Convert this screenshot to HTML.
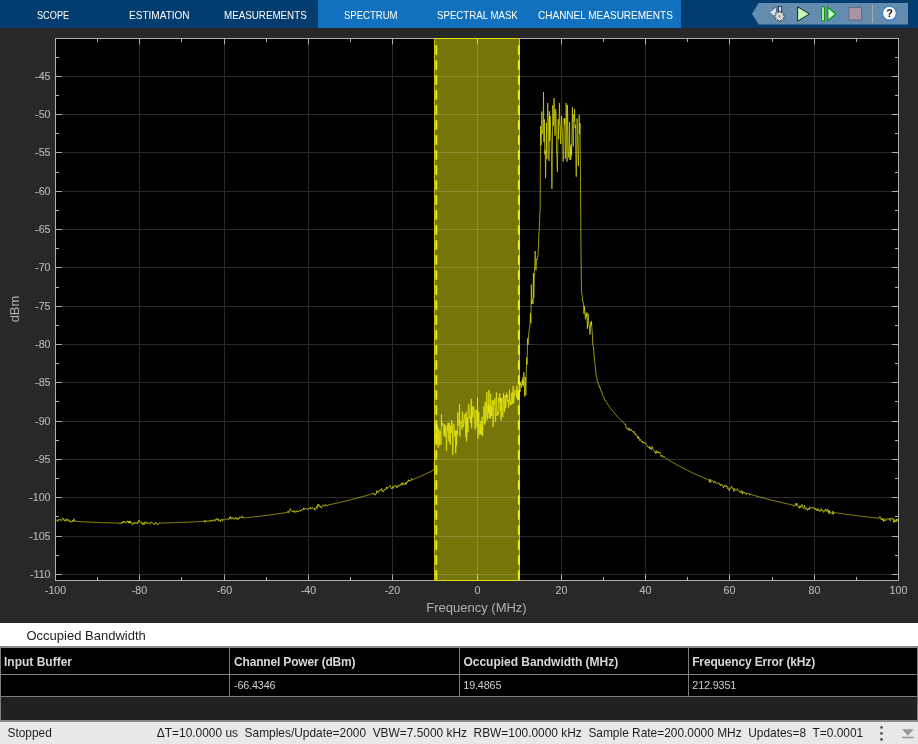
<!DOCTYPE html>
<html><head><meta charset="utf-8"><title>Spectrum Analyzer</title>
<style>
html,body{margin:0;padding:0;}
body{width:918px;height:744px;overflow:hidden;background:#282828;font-family:"Liberation Sans",Arial,sans-serif;position:relative;}
.tb,.hdr,.tbl,.sb{will-change:transform;}
.tb{position:absolute;left:0;top:0;width:918px;height:28px;background:#033d70;}
.sel{position:absolute;left:318px;top:0;width:363px;height:28px;background:#1171be;}
.tab{position:absolute;top:0;height:28px;line-height:30px;color:#fff;font-size:11px;white-space:nowrap;transform-origin:0 50%;}
.plot{position:absolute;left:0;top:28px;will-change:transform;}
.hdr{position:absolute;left:0;top:623px;width:918px;height:24px;background:#fff;color:#222;font-size:13px;line-height:25.6px;}
.hdr span{position:absolute;left:26.5px;top:0;}
.tbl{position:absolute;left:0;top:646px;width:918px;height:76px;background:#212121;box-sizing:border-box;border:2px solid #8a8a8a;border-left:1px solid #7d7d7d;border-right:1px solid #7d7d7d;}
.row{position:absolute;left:0;width:916px;background:#000;border-bottom:1px solid #7d7d7d;}
.r1{top:0;height:26px;}
.r2{top:27px;height:21px;}
.cell{position:absolute;top:0;bottom:0;box-sizing:border-box;border-left:1px solid #7d7d7d;padding-left:4px;white-space:nowrap;}
.r1 .cell{font-weight:bold;font-size:12px;color:#d8d8d8;line-height:29px;}
.r2 .cell{font-size:10.8px;color:#cdcdcd;line-height:20px;letter-spacing:-0.15px;}
.sb{position:absolute;left:0;top:722px;width:918px;height:22px;background:#e8e8e8;color:#1e1e1e;font-size:11.92px;line-height:22px;white-space:nowrap;}
.sb .l{position:absolute;left:7.5px;top:0;}
.sb .r{position:absolute;right:54.8px;top:0;}
</style></head><body>
<div class="tb">
<div class="sel"></div>
<div class="tab" style="left:36.8px;transform:scaleX(0.8338)">SCOPE</div>
<div class="tab" style="left:128.6px;transform:scaleX(0.9127)">ESTIMATION</div>
<div class="tab" style="left:223.5px;transform:scaleX(0.8902)">MEASUREMENTS</div>
<div class="tab" style="left:343.9px;transform:scaleX(0.8671)">SPECTRUM</div>
<div class="tab" style="left:436.8px;transform:scaleX(0.8792)">SPECTRAL MASK</div>
<div class="tab" style="left:538.3px;transform:scaleX(0.9102)">CHANNEL MEASUREMENTS</div>
<svg style="position:absolute;left:748px;top:0" width="170" height="28" viewBox="748 0 170 28">
<path d="M752,13.7 L758.6,3 H908 V24.4 H758.6 Z" fill="#648caf"/>
<!-- settings icon -->
<path d="M769.4,12.4 L776.4,6.7 V18 Z" fill="#cce6ff" stroke="#4a5a6a" stroke-width="0.8" stroke-linejoin="round"/>
<rect x="778.4" y="6.5" width="3.2" height="8" fill="#cce6ff" stroke="#2a2f36" stroke-width="0.9"/>
<path d="M783.29,15.39 L784.76,15.64 L784.76,16.96 L783.29,17.21 L782.83,18.34 L783.69,19.55 L782.75,20.49 L781.54,19.63 L780.41,20.09 L780.16,21.56 L778.84,21.56 L778.59,20.09 L777.46,19.63 L776.25,20.49 L775.31,19.55 L776.17,18.34 L775.71,17.21 L774.24,16.96 L774.24,15.64 L775.71,15.39 L776.17,14.26 L775.31,13.05 L776.25,12.11 L777.46,12.97 L778.59,12.51 L778.84,11.04 L780.16,11.04 L780.41,12.51 L781.54,12.97 L782.75,12.11 L783.69,13.05 L782.83,14.26Z" fill="#e2e2e2" stroke="#4a4a4a" stroke-width="0.8" stroke-linejoin="round"/>
<circle cx="779.5" cy="16.3" r="1.4" fill="#999"/>
<!-- play -->
<path d="M797.6,6.8 L809.4,13.9 L797.6,21.2 Z" fill="#c4f8b8" stroke="#1e2a1e" stroke-width="1" stroke-linejoin="round"/>
<!-- step -->
<rect x="821.6" y="6.7" width="2.8" height="14.4" rx="1" fill="#ccffcc" stroke="#0a9a0a" stroke-width="1.2"/>
<path d="M827.8,7.2 L835.8,13.9 L827.8,20.6 Z" fill="#ccffcc" stroke="#0a9a0a" stroke-width="1.3" stroke-linejoin="round"/>
<!-- stop -->
<rect x="848.9" y="7.4" width="12.6" height="12.6" fill="#ab94a4" stroke="#5f6a78" stroke-width="0.9"/>
<path d="M872.5,5V22.7" stroke="#b0a8a0" stroke-width="1"/>
<circle cx="889.4" cy="13.2" r="6.9" fill="#fff" stroke="#2a7ad0" stroke-width="1.1"/>
<text x="889.5" y="17.4" font-family="'Liberation Sans',Arial,sans-serif" font-weight="bold" font-size="11" text-anchor="middle" fill="#1a1a1a">?</text>
</svg>
</div>
<svg class="plot" width="918" height="594" viewBox="0 28 918 594">
<rect x="55.5" y="38.5" width="843" height="542" fill="#000"/>
<rect x="434.5" y="38.5" width="85" height="542" fill="#75750a" stroke="#c9c90a" stroke-width="1"/>
<clipPath id="cp"><rect x="55.5" y="38.5" width="843" height="542"/></clipPath>
<clipPath id="cb"><rect x="434.5" y="38.5" width="85" height="542"/></clipPath>
<path d="M55.00,519.95 L55.42,520.21 L55.84,520.10 L56.26,519.78 L56.68,520.44 L57.10,519.88 L57.52,520.66 L57.94,521.66 L58.36,519.97 L58.78,519.11 L59.20,520.11 L59.62,519.91 L60.04,520.14 L60.46,519.60 L60.88,520.35 L61.30,520.93 L61.72,519.48 L62.14,519.40 L62.56,517.72 L62.98,518.64 L63.40,518.82 L63.82,520.23 L64.24,519.88 L64.66,521.24 L65.08,521.13 L65.50,520.95 L65.92,518.66 L66.34,520.38 L66.76,521.04 L67.18,521.25 L67.60,519.36 L68.02,520.08 L68.44,519.77 L68.86,519.70 L69.28,521.71 L69.70,520.40 L70.12,521.41 L70.54,522.42 L70.96,521.24 L71.38,521.63 L71.80,521.65 L72.22,521.82 L72.64,520.16 L73.06,521.50 L73.48,521.79 L73.90,518.74 L74.32,520.54 L74.74,520.06 L75.16,521.36 L75.58,521.38 L76.00,521.41 L76.42,521.43 L76.84,521.46 L77.26,521.48 L77.68,521.51 L78.10,521.53 L78.52,521.55 L78.94,521.58 L79.36,521.60 L79.78,521.63 L80.20,521.65 L80.62,521.67 L81.04,521.69 L81.46,521.72 L81.88,521.74 L82.30,521.76 L82.72,521.78 L83.14,521.81 L83.56,521.83 L83.98,521.85 L84.40,521.87 L84.82,521.89 L85.24,521.92 L85.66,521.94 L86.08,521.96 L86.50,521.98 L86.92,522.00 L87.34,522.02 L87.76,522.04 L88.18,522.06 L88.60,522.08 L89.02,522.10 L89.44,522.12 L89.86,522.14 L90.28,522.16 L90.70,522.18 L91.12,522.20 L91.54,522.21 L91.96,522.23 L92.38,522.25 L92.80,522.27 L93.22,522.29 L93.64,522.31 L94.06,522.32 L94.48,522.34 L94.90,522.36 L95.32,522.38 L95.74,522.39 L96.16,522.41 L96.58,522.43 L97.00,522.44 L97.42,522.46 L97.84,522.48 L98.26,522.49 L98.68,522.51 L99.10,522.52 L99.52,522.54 L99.94,522.55 L100.36,522.57 L100.78,522.58 L101.20,522.60 L101.62,522.61 L102.04,522.63 L102.46,522.64 L102.88,522.66 L103.30,522.67 L103.72,522.69 L104.14,522.70 L104.56,522.71 L104.98,522.73 L105.40,522.74 L105.82,522.75 L106.24,522.76 L106.66,522.78 L107.08,522.79 L107.50,522.80 L107.92,522.81 L108.34,522.83 L108.76,522.84 L109.18,522.85 L109.60,522.86 L110.02,522.87 L110.44,522.88 L110.86,522.90 L111.28,522.91 L111.70,522.92 L112.12,522.93 L112.54,522.94 L112.96,522.95 L113.38,522.96 L113.80,522.97 L114.22,522.98 L114.64,522.99 L115.06,523.00 L115.48,523.01 L115.90,523.02 L116.32,523.02 L116.74,523.03 L117.16,523.04 L117.58,523.05 L118.00,523.06 L118.42,523.07 L118.84,523.07 L119.26,523.08 L119.68,524.06 L120.10,523.64 L120.52,523.70 L120.94,523.93 L121.36,522.50 L121.78,522.04 L122.20,523.41 L122.62,523.28 L123.04,521.08 L123.46,522.28 L123.88,522.40 L124.30,521.16 L124.72,522.78 L125.14,522.21 L125.56,523.24 L125.98,522.52 L126.40,522.22 L126.82,521.14 L127.24,521.96 L127.66,520.80 L128.08,521.72 L128.50,522.98 L128.92,521.17 L129.34,523.25 L129.76,520.80 L130.18,522.87 L130.60,521.57 L131.02,523.26 L131.44,523.11 L131.86,522.57 L132.28,524.47 L132.70,525.13 L133.12,523.72 L133.54,523.44 L133.96,522.50 L134.38,522.09 L134.80,523.81 L135.22,522.41 L135.64,522.86 L136.06,522.58 L136.48,523.21 L136.90,522.43 L137.32,523.95 L137.74,522.51 L138.16,522.96 L138.58,520.83 L139.00,520.08 L139.42,521.45 L139.84,521.47 L140.26,522.19 L140.68,522.56 L141.10,523.12 L141.52,521.85 L141.94,522.34 L142.36,524.76 L142.78,523.08 L143.20,522.66 L143.62,523.95 L144.04,524.91 L144.46,522.18 L144.88,523.38 L145.30,522.57 L145.72,521.77 L146.14,523.44 L146.56,523.07 L146.98,522.99 L147.40,522.09 L147.82,523.30 L148.24,523.28 L148.66,523.51 L149.08,522.92 L149.50,523.34 L149.92,524.20 L150.34,522.27 L150.76,523.06 L151.18,522.57 L151.60,521.79 L152.02,522.43 L152.44,523.26 L152.86,522.84 L153.28,523.04 L153.70,523.50 L154.12,525.01 L154.54,524.47 L154.96,523.74 L155.38,522.28 L155.80,522.05 L156.22,523.86 L156.64,524.31 L157.06,523.68 L157.48,524.83 L157.90,524.62 L158.32,524.29 L158.74,524.02 L159.16,522.66 L159.58,523.06 L160.00,523.05 L160.42,523.05 L160.84,523.04 L161.26,523.03 L161.68,523.02 L162.10,523.01 L162.52,523.00 L162.94,522.99 L163.36,522.98 L163.78,522.97 L164.20,522.96 L164.62,522.95 L165.04,522.94 L165.46,522.93 L165.88,522.92 L166.30,522.91 L166.72,522.90 L167.14,522.89 L167.56,522.88 L167.98,522.87 L168.40,522.86 L168.82,522.84 L169.24,522.83 L169.66,522.82 L170.08,522.81 L170.50,522.80 L170.92,522.78 L171.34,522.77 L171.76,522.76 L172.18,522.74 L172.60,522.73 L173.02,522.72 L173.44,522.70 L173.86,522.69 L174.28,522.68 L174.70,522.66 L175.12,522.65 L175.54,522.63 L175.96,522.62 L176.38,522.61 L176.80,522.59 L177.22,522.58 L177.64,522.56 L178.06,522.55 L178.48,522.53 L178.90,522.51 L179.32,522.50 L179.74,522.48 L180.16,522.47 L180.58,522.45 L181.00,522.43 L181.42,522.42 L181.84,522.40 L182.26,522.38 L182.68,522.37 L183.10,522.35 L183.52,522.33 L183.94,522.31 L184.36,522.30 L184.78,522.28 L185.20,522.26 L185.62,522.24 L186.04,522.22 L186.46,522.20 L186.88,522.18 L187.30,522.17 L187.72,522.15 L188.14,522.13 L188.56,522.11 L188.98,522.09 L189.40,522.07 L189.82,522.05 L190.24,522.03 L190.66,522.01 L191.08,521.99 L191.50,521.97 L191.92,521.95 L192.34,521.92 L192.76,521.90 L193.18,521.88 L193.60,521.86 L194.02,521.84 L194.44,521.82 L194.86,521.79 L195.28,521.77 L195.70,521.75 L196.12,521.73 L196.54,521.70 L196.96,521.68 L197.38,521.66 L197.80,521.63 L198.22,521.61 L198.64,521.59 L199.06,521.56 L199.48,521.54 L199.90,521.52 L200.32,521.49 L200.74,521.47 L201.16,521.44 L201.58,521.42 L202.00,521.39 L202.42,521.37 L202.84,521.34 L203.26,521.32 L203.68,521.67 L204.10,520.78 L204.52,520.31 L204.94,522.55 L205.36,521.42 L205.78,520.38 L206.20,520.77 L206.62,520.56 L207.04,521.58 L207.46,522.10 L207.88,521.47 L208.30,520.84 L208.72,521.40 L209.14,521.20 L209.56,520.32 L209.98,521.34 L210.40,521.17 L210.82,521.36 L211.24,519.86 L211.66,520.79 L212.08,521.39 L212.50,520.07 L212.92,520.40 L213.34,520.84 L213.76,520.20 L214.18,519.57 L214.60,520.44 L215.02,521.47 L215.44,519.57 L215.86,519.64 L216.28,518.73 L216.70,519.48 L217.12,518.27 L217.54,518.87 L217.96,520.50 L218.38,518.92 L218.80,520.76 L219.22,520.83 L219.64,519.71 L220.06,520.23 L220.48,521.84 L220.90,519.94 L221.32,519.98 L221.74,518.98 L222.16,520.06 L222.58,520.97 L223.00,520.68 L223.42,519.10 L223.84,519.19 L224.26,519.36 L224.68,519.79 L225.10,519.40 L225.52,519.83 L225.94,519.60 L226.36,519.37 L226.78,519.07 L227.20,519.43 L227.62,518.53 L228.04,518.73 L228.46,519.85 L228.88,519.57 L229.30,518.43 L229.72,516.91 L230.14,518.95 L230.56,516.61 L230.98,516.81 L231.40,518.91 L231.82,518.86 L232.24,518.49 L232.66,517.24 L233.08,518.35 L233.50,518.00 L233.92,518.94 L234.34,519.55 L234.76,518.56 L235.18,517.45 L235.60,517.44 L236.02,518.70 L236.44,519.16 L236.86,517.75 L237.28,519.45 L237.70,517.95 L238.12,519.38 L238.54,518.94 L238.96,518.51 L239.38,516.79 L239.80,518.15 L240.22,517.74 L240.64,517.36 L241.06,517.66 L241.48,516.99 L241.90,515.73 L242.32,518.04 L242.74,517.25 L243.16,517.98 L243.58,517.86 L244.00,517.99 L244.42,517.94 L244.84,517.90 L245.26,517.86 L245.68,517.81 L246.10,517.77 L246.52,517.72 L246.94,517.68 L247.36,517.64 L247.78,517.59 L248.20,517.55 L248.62,517.50 L249.04,517.45 L249.46,517.41 L249.88,517.36 L250.30,517.32 L250.72,517.27 L251.14,517.22 L251.56,517.18 L251.98,517.13 L252.40,517.08 L252.82,517.04 L253.24,516.99 L253.66,516.94 L254.08,516.89 L254.50,516.84 L254.92,516.80 L255.34,516.75 L255.76,516.70 L256.18,516.65 L256.60,516.60 L257.02,516.55 L257.44,516.50 L257.86,516.45 L258.28,516.40 L258.70,516.35 L259.12,516.30 L259.54,516.25 L259.96,516.20 L260.38,516.15 L260.80,516.10 L261.22,516.05 L261.64,516.00 L262.06,515.95 L262.48,515.89 L262.90,515.84 L263.32,515.79 L263.74,515.74 L264.16,515.68 L264.58,515.63 L265.00,515.58 L265.42,515.52 L265.84,515.47 L266.26,515.42 L266.68,515.36 L267.10,515.31 L267.52,515.25 L267.94,515.20 L268.36,515.14 L268.78,515.09 L269.20,515.03 L269.62,514.98 L270.04,514.92 L270.46,514.87 L270.88,514.81 L271.30,514.75 L271.72,514.70 L272.14,514.64 L272.56,514.58 L272.98,514.53 L273.40,514.47 L273.82,514.41 L274.24,514.35 L274.66,514.30 L275.08,514.24 L275.50,514.18 L275.92,514.12 L276.34,514.06 L276.76,514.00 L277.18,513.94 L277.60,513.88 L278.02,513.82 L278.44,513.76 L278.86,513.70 L279.28,513.64 L279.70,513.58 L280.12,513.52 L280.54,513.46 L280.96,513.40 L281.38,513.34 L281.80,513.28 L282.22,513.22 L282.64,513.15 L283.06,513.09 L283.48,513.03 L283.90,512.97 L284.32,512.90 L284.74,512.84 L285.16,512.78 L285.58,512.71 L286.00,512.65 L286.42,512.58 L286.84,512.52 L287.26,512.45 L287.68,512.39 L288.10,510.95 L288.52,512.69 L288.94,512.52 L289.36,511.06 L289.78,510.36 L290.20,508.65 L290.62,510.27 L291.04,510.89 L291.46,511.07 L291.88,511.07 L292.30,510.81 L292.72,511.96 L293.14,510.82 L293.56,511.73 L293.98,512.50 L294.40,510.93 L294.82,510.61 L295.24,512.31 L295.66,511.91 L296.08,511.65 L296.50,512.19 L296.92,510.62 L297.34,511.60 L297.76,511.10 L298.18,511.83 L298.60,511.10 L299.02,510.72 L299.44,510.53 L299.86,511.19 L300.28,510.26 L300.70,511.34 L301.12,510.79 L301.54,509.45 L301.96,510.13 L302.38,509.10 L302.80,509.52 L303.22,509.56 L303.64,507.75 L304.06,509.68 L304.48,509.22 L304.90,508.11 L305.32,508.58 L305.74,508.97 L306.16,508.43 L306.58,509.01 L307.00,509.45 L307.42,509.54 L307.84,508.55 L308.26,509.27 L308.68,509.00 L309.10,508.44 L309.52,507.97 L309.94,508.61 L310.36,506.99 L310.78,508.70 L311.20,508.40 L311.62,508.46 L312.04,508.54 L312.46,507.31 L312.88,507.71 L313.30,508.73 L313.72,509.26 L314.14,509.31 L314.56,507.98 L314.98,509.84 L315.40,510.39 L315.82,509.46 L316.24,507.83 L316.66,506.24 L317.08,508.35 L317.50,506.64 L317.92,504.07 L318.34,506.32 L318.76,504.81 L319.18,504.53 L319.60,505.22 L320.02,507.31 L320.44,506.45 L320.86,506.61 L321.28,508.16 L321.70,507.72 L322.12,506.02 L322.54,505.32 L322.96,504.81 L323.38,505.05 L323.80,505.96 L324.22,505.85 L324.64,505.76 L325.06,506.29 L325.48,504.23 L325.90,504.67 L326.32,505.24 L326.74,505.85 L327.16,506.25 L327.58,506.04 L328.00,505.02 L328.42,504.93 L328.84,504.84 L329.26,504.75 L329.68,504.66 L330.10,504.57 L330.52,504.48 L330.94,504.39 L331.36,504.30 L331.78,504.21 L332.20,504.11 L332.62,504.02 L333.04,503.93 L333.46,503.84 L333.88,503.74 L334.30,503.65 L334.72,503.55 L335.14,503.46 L335.56,503.37 L335.98,503.27 L336.40,503.18 L336.82,503.08 L337.24,502.98 L337.66,502.89 L338.08,502.79 L338.50,502.70 L338.92,502.60 L339.34,502.50 L339.76,502.40 L340.18,502.31 L340.60,502.21 L341.02,502.11 L341.44,502.01 L341.86,501.91 L342.28,501.81 L342.70,501.71 L343.12,501.61 L343.54,501.51 L343.96,501.41 L344.38,501.31 L344.80,501.21 L345.22,501.11 L345.64,501.00 L346.06,500.90 L346.48,500.80 L346.90,500.70 L347.32,500.59 L347.74,500.49 L348.16,500.39 L348.58,500.28 L349.00,500.18 L349.42,500.07 L349.84,499.97 L350.26,499.86 L350.68,499.75 L351.10,499.65 L351.52,499.54 L351.94,499.44 L352.36,499.33 L352.78,499.22 L353.20,499.11 L353.62,499.00 L354.04,498.90 L354.46,498.79 L354.88,498.68 L355.30,498.57 L355.72,498.46 L356.14,498.35 L356.56,498.24 L356.98,498.12 L357.40,498.01 L357.82,497.90 L358.24,497.79 L358.66,497.68 L359.08,497.56 L359.50,497.45 L359.92,497.34 L360.34,497.22 L360.76,497.11 L361.18,496.99 L361.60,496.88 L362.02,496.76 L362.44,496.65 L362.86,496.53 L363.28,496.41 L363.70,496.30 L364.12,496.18 L364.54,496.06 L364.96,495.95 L365.38,495.83 L365.80,495.71 L366.22,495.59 L366.64,495.47 L367.06,495.35 L367.48,495.23 L367.90,495.11 L368.32,494.99 L368.74,494.87 L369.16,494.74 L369.58,494.62 L370.00,494.50 L370.42,494.38 L370.84,494.25 L371.26,494.13 L371.68,494.00 L372.10,493.88 L372.52,493.08 L372.94,492.81 L373.36,494.25 L373.78,494.30 L374.20,494.13 L374.62,493.40 L375.04,495.36 L375.46,495.14 L375.88,493.97 L376.30,493.49 L376.72,490.64 L377.14,492.57 L377.56,491.68 L377.98,491.55 L378.40,492.56 L378.82,491.64 L379.24,490.07 L379.66,491.12 L380.08,490.36 L380.50,490.06 L380.92,489.45 L381.34,489.93 L381.76,488.44 L382.18,491.56 L382.60,490.41 L383.02,491.21 L383.44,492.08 L383.86,491.24 L384.28,489.08 L384.70,489.80 L385.12,489.15 L385.54,489.56 L385.96,488.80 L386.38,487.04 L386.80,489.03 L387.22,487.27 L387.64,488.14 L388.06,487.86 L388.48,487.06 L388.90,486.70 L389.32,486.33 L389.74,486.45 L390.16,485.49 L390.58,486.85 L391.00,488.59 L391.42,488.92 L391.84,488.34 L392.26,487.70 L392.68,486.65 L393.10,488.63 L393.52,486.80 L393.94,486.12 L394.36,485.56 L394.78,486.44 L395.20,485.72 L395.62,486.39 L396.04,485.60 L396.46,486.57 L396.88,488.06 L397.30,485.80 L397.72,485.90 L398.14,486.78 L398.56,486.34 L398.98,484.79 L399.40,485.56 L399.82,485.97 L400.24,484.89 L400.66,484.24 L401.08,485.24 L401.50,483.09 L401.92,483.25 L402.34,483.12 L402.76,485.29 L403.18,482.53 L403.60,483.12 L404.02,483.31 L404.44,484.40 L404.86,484.32 L405.28,484.66 L405.70,482.35 L406.12,484.44 L406.54,482.48 L406.96,481.74 L407.38,482.66 L407.80,481.43 L408.22,479.61 L408.64,481.27 L409.06,480.09 L409.48,480.54 L409.90,480.98 L410.32,480.55 L410.74,481.36 L411.16,480.02 L411.58,478.39 L412.00,478.84 L412.42,479.76 L412.84,479.59 L413.26,479.42 L413.68,479.24 L414.10,479.07 L414.52,478.89 L414.94,478.71 L415.36,478.54 L415.78,478.36 L416.20,478.18 L416.62,478.00 L417.04,477.82 L417.46,477.64 L417.88,477.46 L418.30,477.28 L418.72,477.10 L419.14,476.92 L419.56,476.73 L419.98,476.55 L420.40,476.36 L420.82,476.18 L421.24,475.99 L421.66,475.80 L422.08,475.62 L422.50,475.43 L422.92,475.24 L423.34,475.05 L423.76,474.86 L424.18,474.67 L424.60,474.48 L425.02,474.28 L425.44,474.09 L425.86,473.89 L426.28,473.70 L426.70,473.50 L427.12,473.31 L427.54,473.11 L427.96,472.91 L428.38,472.71 L428.80,472.51 L429.22,472.31 L429.64,472.11 L430.06,471.91 L430.48,471.71 L430.90,471.50 L431.32,471.30 L431.74,471.09 L432.16,470.89 L432.58,470.68 L433.00,470.47 L433.42,470.27 L433.84,470.06 L434.26,469.85 L434.30,469.83 L434.72,422.60 L435.14,432.53 L435.56,434.88 L435.98,436.07 L436.40,425.81 L436.82,441.11 L437.24,424.78 L437.66,432.75 L438.08,447.72 L438.50,428.57 L438.92,429.93 L439.34,445.25 L439.76,430.71 L440.18,431.32 L440.60,436.10 L441.02,444.84 L441.44,414.13 L441.86,426.06 L442.28,424.29 L442.70,423.42 L443.12,425.31 L443.54,425.28 L443.96,436.17 L444.38,424.48 L444.80,433.95 L445.22,437.01 L445.64,425.46 L446.06,433.71 L446.48,451.11 L446.90,435.73 L447.32,425.70 L447.74,431.09 L448.16,422.66 L448.58,434.72 L449.00,441.76 L449.42,423.10 L449.84,429.03 L450.26,444.66 L450.68,425.85 L451.10,433.09 L451.52,420.16 L451.94,422.09 L452.36,425.00 L452.78,455.02 L453.20,425.64 L453.62,424.16 L454.04,423.57 L454.46,427.32 L454.88,436.81 L455.30,430.80 L455.72,453.21 L456.14,430.59 L456.56,445.53 L456.98,430.84 L457.40,434.64 L457.82,412.37 L458.24,425.38 L458.66,425.71 L459.08,423.69 L459.50,404.18 L459.92,436.48 L460.34,421.47 L460.76,420.69 L461.18,422.28 L461.60,422.29 L462.02,429.35 L462.44,411.26 L462.86,414.43 L463.28,427.14 L463.70,425.09 L464.12,419.24 L464.54,417.00 L464.96,414.11 L465.38,421.87 L465.80,437.09 L466.22,411.56 L466.64,441.42 L467.06,432.91 L467.48,417.55 L467.90,432.14 L468.32,406.84 L468.74,403.95 L469.16,408.47 L469.58,417.68 L470.00,418.51 L470.42,416.43 L470.84,423.18 L471.26,398.86 L471.68,428.32 L472.10,406.34 L472.52,414.50 L472.94,417.13 L473.36,408.91 L473.78,406.44 L474.20,410.37 L474.62,421.34 L475.04,429.47 L475.46,429.11 L475.88,410.14 L476.30,412.34 L476.72,410.80 L477.14,427.46 L477.56,397.85 L477.98,438.49 L478.40,415.48 L478.82,411.95 L479.24,425.54 L479.66,434.74 L480.08,424.65 L480.50,433.89 L480.92,420.90 L481.34,435.13 L481.76,434.74 L482.18,416.75 L482.60,436.07 L483.02,419.09 L483.44,417.66 L483.86,406.67 L484.28,412.79 L484.70,424.85 L485.12,401.84 L485.54,422.25 L485.96,418.17 L486.38,416.87 L486.80,392.29 L487.22,411.81 L487.64,419.69 L488.06,404.97 L488.48,412.52 L488.90,389.92 L489.32,417.89 L489.74,404.51 L490.16,418.96 L490.58,393.85 L491.00,416.05 L491.42,406.63 L491.84,416.16 L492.26,400.41 L492.68,402.67 L493.10,427.08 L493.52,400.57 L493.94,401.35 L494.36,404.49 L494.78,398.47 L495.20,417.40 L495.62,422.11 L496.04,400.32 L496.46,392.36 L496.88,416.01 L497.30,415.12 L497.72,412.21 L498.14,414.95 L498.56,397.87 L498.98,402.78 L499.40,393.72 L499.82,393.29 L500.24,411.89 L500.66,398.26 L501.08,420.38 L501.50,403.21 L501.92,397.85 L502.34,408.87 L502.76,417.05 L503.18,405.69 L503.60,393.08 L504.02,404.20 L504.44,412.19 L504.86,397.36 L505.28,395.28 L505.70,408.35 L506.12,401.07 L506.54,392.68 L506.96,397.21 L507.38,394.72 L507.80,401.55 L508.22,399.97 L508.64,407.48 L509.06,403.99 L509.48,389.47 L509.90,401.38 L510.32,404.60 L510.74,401.32 L511.16,405.00 L511.58,394.85 L512.00,392.57 L512.42,403.56 L512.84,391.80 L513.26,386.10 L513.68,403.39 L514.10,393.28 L514.52,395.22 L514.94,389.82 L515.36,390.12 L515.78,390.85 L516.20,394.43 L516.62,397.95 L517.04,385.62 L517.46,399.57 L517.88,390.41 L518.30,390.83 L518.72,392.03 L519.14,388.93 L519.56,382.06 L519.98,392.03 L520.40,382.32 L520.82,385.21 L521.24,384.23 L521.66,387.85 L522.08,380.12 L522.50,384.91 L522.92,377.21 L523.34,386.23 L523.76,372.25 L524.18,374.49 L524.60,396.40 L525.02,379.94 L525.44,377.19 L525.86,395.33 L526.28,372.93 L526.70,357.55 L527.12,364.44 L527.54,338.36 L527.96,344.93 L528.38,341.62 L528.80,333.05 L529.22,329.32 L529.64,328.05 L530.06,323.90 L530.48,313.17 L530.90,323.25 L531.32,284.59 L531.74,304.06 L532.16,301.40 L532.58,299.23 L533.00,304.10 L533.42,273.08 L533.84,298.43 L534.26,278.46 L534.68,266.18 L535.10,250.95 L535.52,255.46 L535.94,270.13 L536.36,259.21 L536.78,260.06 L537.20,259.76 L537.62,256.99 L538.04,255.67 L538.46,245.60 L538.88,234.15 L539.30,229.00 L539.72,217.07 L540.14,208.56 L540.56,126.18 L540.98,145.43 L541.40,139.75 L541.82,111.50 L542.24,134.18 L542.66,132.46 L543.08,129.79 L543.50,92.10 L543.92,142.09 L544.34,119.34 L544.76,154.20 L545.18,150.22 L545.60,178.00 L546.02,152.86 L546.44,122.79 L546.86,159.02 L547.28,121.98 L547.70,103.10 L548.12,116.72 L548.54,121.88 L548.96,161.02 L549.38,111.20 L549.80,141.19 L550.22,115.89 L550.64,131.73 L551.06,136.91 L551.48,156.99 L551.90,188.80 L552.32,157.95 L552.74,105.20 L553.16,112.72 L553.58,125.75 L554.00,98.10 L554.42,107.71 L554.84,135.73 L555.26,134.78 L555.68,109.20 L556.10,114.25 L556.52,150.05 L556.94,158.51 L557.36,171.70 L557.78,148.92 L558.20,119.23 L558.62,139.20 L559.04,122.87 L559.46,103.00 L559.88,124.89 L560.30,125.98 L560.72,144.10 L561.14,128.01 L561.56,115.90 L561.98,122.41 L562.40,131.55 L562.82,146.20 L563.24,161.60 L563.66,149.51 L564.08,118.64 L564.50,124.46 L564.92,118.06 L565.34,158.56 L565.76,147.60 L566.18,103.00 L566.60,125.30 L567.02,161.60 L567.44,105.20 L567.86,124.87 L568.28,149.21 L568.70,157.50 L569.12,150.06 L569.54,122.00 L569.96,160.11 L570.38,146.32 L570.80,159.60 L571.22,144.36 L571.64,155.53 L572.06,121.70 L572.48,107.20 L572.90,141.02 L573.32,146.40 L573.74,114.51 L574.16,121.50 L574.58,109.20 L575.00,128.23 L575.42,124.68 L575.84,159.64 L576.26,176.70 L576.68,150.88 L577.10,118.47 L577.52,134.60 L577.94,150.63 L578.36,166.00 L578.78,147.38 L579.20,114.90 L579.62,134.00 L580.04,123.14 L580.46,172.73 L580.88,235.56 L581.00,250.70 L581.42,290.52 L581.84,293.93 L582.26,296.32 L582.68,301.07 L583.10,302.48 L583.52,302.55 L583.94,313.86 L584.36,306.27 L584.78,311.67 L585.20,317.24 L585.62,319.33 L586.04,313.40 L586.46,316.67 L586.88,312.43 L587.30,328.85 L587.72,323.25 L588.14,313.66 L588.56,321.14 L588.98,326.24 L589.40,325.68 L589.82,334.62 L590.24,332.71 L590.66,322.08 L591.08,325.65 L591.50,321.23 L591.92,328.65 L592.34,333.74 L592.76,344.14 L593.18,346.20 L593.60,347.97 L594.02,354.76 L594.44,360.48 L594.86,362.26 L595.28,366.26 L595.70,370.35 L596.12,374.63 L596.54,377.39 L596.96,378.38 L597.38,381.75 L597.80,382.19 L598.22,383.41 L598.64,383.66 L599.06,385.20 L599.48,387.39 L599.90,386.61 L600.32,388.81 L600.74,390.37 L601.16,390.64 L601.58,392.10 L602.00,392.32 L602.42,394.81 L602.84,395.70 L603.26,396.27 L603.68,396.36 L604.10,397.71 L604.52,399.32 L604.94,400.30 L605.36,400.48 L605.78,401.51 L606.20,401.82 L606.62,402.48 L607.04,403.13 L607.46,403.77 L607.88,404.40 L608.30,405.02 L608.72,405.63 L609.14,406.23 L609.56,406.83 L609.98,407.42 L610.40,408.00 L610.82,408.57 L611.24,409.13 L611.66,409.69 L612.08,410.24 L612.50,410.78 L612.92,411.32 L613.34,411.84 L613.76,412.35 L614.18,412.86 L614.60,413.36 L615.02,413.86 L615.44,414.35 L615.86,414.83 L616.28,415.31 L616.70,415.78 L617.12,416.25 L617.54,416.71 L617.96,417.17 L618.38,417.62 L618.80,418.07 L619.22,418.51 L619.64,418.95 L620.06,419.38 L620.48,419.81 L620.90,420.23 L621.32,420.65 L621.74,421.06 L622.16,421.47 L622.58,421.87 L623.00,422.28 L623.42,422.67 L623.84,423.07 L624.26,423.45 L624.68,423.84 L625.10,424.59 L625.52,423.82 L625.94,426.16 L626.36,428.11 L626.78,428.69 L627.20,427.68 L627.62,429.13 L628.04,428.99 L628.46,428.71 L628.88,430.42 L629.30,427.92 L629.72,430.11 L630.14,429.73 L630.56,430.98 L630.98,430.18 L631.40,429.21 L631.82,430.54 L632.24,431.23 L632.66,431.39 L633.08,432.20 L633.50,432.51 L633.92,431.02 L634.34,433.70 L634.76,433.84 L635.18,433.24 L635.60,433.20 L636.02,435.34 L636.44,434.68 L636.86,435.38 L637.28,436.42 L637.70,438.37 L638.12,436.00 L638.54,438.88 L638.96,437.68 L639.38,438.61 L639.80,440.97 L640.22,440.32 L640.64,439.39 L641.06,440.55 L641.48,441.40 L641.90,442.17 L642.32,441.10 L642.74,442.97 L643.16,442.81 L643.58,441.99 L644.00,443.20 L644.42,443.12 L644.84,442.27 L645.26,443.16 L645.68,443.65 L646.10,443.72 L646.52,444.38 L646.94,445.41 L647.36,446.80 L647.78,446.51 L648.20,447.25 L648.62,447.41 L649.04,446.62 L649.46,448.50 L649.88,446.71 L650.30,448.79 L650.72,447.74 L651.14,449.81 L651.56,449.73 L651.98,446.46 L652.40,446.67 L652.82,448.70 L653.24,449.26 L653.66,450.13 L654.08,450.51 L654.50,452.28 L654.92,452.17 L655.34,452.30 L655.76,453.74 L656.18,450.45 L656.60,452.56 L657.02,451.75 L657.44,452.99 L657.86,452.36 L658.28,451.59 L658.70,452.90 L659.12,452.04 L659.54,452.73 L659.96,452.07 L660.38,454.46 L660.80,455.45 L661.22,456.59 L661.64,455.30 L662.06,456.54 L662.48,455.64 L662.90,455.92 L663.32,456.48 L663.74,457.53 L664.16,456.41 L664.58,457.21 L665.00,457.61 L665.42,458.07 L665.84,458.33 L666.26,458.59 L666.68,458.85 L667.10,459.10 L667.52,459.36 L667.94,459.62 L668.36,459.87 L668.78,460.12 L669.20,460.38 L669.62,460.63 L670.04,460.88 L670.46,461.13 L670.88,461.37 L671.30,461.62 L671.72,461.86 L672.14,462.11 L672.56,462.35 L672.98,462.59 L673.40,462.83 L673.82,463.07 L674.24,463.31 L674.66,463.55 L675.08,463.79 L675.50,464.02 L675.92,464.26 L676.34,464.49 L676.76,464.72 L677.18,464.95 L677.60,465.18 L678.02,465.41 L678.44,465.64 L678.86,465.87 L679.28,466.10 L679.70,466.32 L680.12,466.55 L680.54,466.77 L680.96,466.99 L681.38,467.22 L681.80,467.44 L682.22,467.66 L682.64,467.88 L683.06,468.09 L683.48,468.31 L683.90,468.53 L684.32,468.74 L684.74,468.96 L685.16,469.17 L685.58,469.38 L686.00,469.60 L686.42,469.81 L686.84,470.02 L687.26,470.23 L687.68,470.44 L688.10,470.64 L688.52,470.85 L688.94,471.06 L689.36,471.26 L689.78,471.47 L690.20,471.67 L690.62,471.87 L691.04,472.08 L691.46,472.28 L691.88,472.48 L692.30,472.68 L692.72,472.88 L693.14,473.07 L693.56,473.27 L693.98,473.47 L694.40,473.66 L694.82,473.86 L695.24,474.05 L695.66,474.25 L696.08,474.44 L696.50,474.63 L696.92,474.82 L697.34,475.01 L697.76,475.20 L698.18,475.39 L698.60,475.58 L699.02,475.77 L699.44,475.96 L699.86,476.14 L700.28,476.33 L700.70,476.51 L701.12,476.70 L701.54,476.88 L701.96,477.07 L702.38,477.25 L702.80,477.43 L703.22,477.61 L703.64,477.79 L704.06,477.97 L704.48,478.15 L704.90,478.33 L705.32,478.50 L705.74,478.68 L706.16,478.86 L706.58,479.03 L707.00,479.21 L707.42,479.38 L707.84,479.56 L708.26,479.73 L708.68,479.90 L709.10,480.07 L709.52,482.37 L709.94,478.98 L710.36,480.53 L710.78,482.52 L711.20,480.45 L711.62,480.28 L712.04,480.02 L712.46,480.33 L712.88,481.18 L713.30,481.56 L713.72,483.04 L714.14,481.99 L714.56,481.97 L714.98,481.11 L715.40,482.46 L715.82,482.49 L716.24,483.50 L716.66,484.13 L717.08,483.53 L717.50,483.19 L717.92,482.34 L718.34,482.64 L718.76,483.16 L719.18,482.97 L719.60,484.67 L720.02,483.99 L720.44,485.71 L720.86,484.49 L721.28,484.33 L721.70,484.60 L722.12,484.40 L722.54,485.73 L722.96,485.70 L723.38,487.90 L723.80,486.74 L724.22,485.63 L724.64,486.27 L725.06,484.94 L725.48,486.50 L725.90,487.06 L726.32,486.93 L726.74,485.74 L727.16,486.14 L727.58,488.79 L728.00,488.01 L728.42,487.68 L728.84,489.11 L729.26,491.04 L729.68,489.87 L730.10,488.09 L730.52,488.15 L730.94,488.10 L731.36,486.59 L731.78,486.31 L732.20,488.49 L732.62,487.84 L733.04,488.53 L733.46,489.71 L733.88,491.56 L734.30,488.26 L734.72,489.24 L735.14,489.81 L735.56,489.64 L735.98,490.66 L736.40,489.72 L736.82,489.23 L737.24,488.59 L737.66,489.78 L738.08,490.73 L738.50,490.69 L738.92,490.18 L739.34,491.65 L739.76,491.68 L740.18,492.82 L740.60,491.91 L741.02,492.32 L741.44,490.49 L741.86,491.67 L742.28,494.12 L742.70,491.13 L743.12,492.69 L743.54,492.92 L743.96,492.43 L744.38,491.98 L744.80,493.07 L745.22,493.55 L745.64,494.09 L746.06,493.00 L746.48,494.47 L746.90,493.13 L747.32,493.04 L747.74,493.07 L748.16,493.57 L748.58,493.61 L749.00,493.37 L749.42,495.23 L749.84,494.23 L750.26,494.35 L750.68,494.48 L751.10,494.60 L751.52,494.72 L751.94,494.84 L752.36,494.96 L752.78,495.09 L753.20,495.21 L753.62,495.33 L754.04,495.45 L754.46,495.57 L754.88,495.69 L755.30,495.80 L755.72,495.92 L756.14,496.04 L756.56,496.16 L756.98,496.28 L757.40,496.39 L757.82,496.51 L758.24,496.63 L758.66,496.74 L759.08,496.86 L759.50,496.97 L759.92,497.09 L760.34,497.20 L760.76,497.32 L761.18,497.43 L761.60,497.54 L762.02,497.66 L762.44,497.77 L762.86,497.88 L763.28,497.99 L763.70,498.10 L764.12,498.22 L764.54,498.33 L764.96,498.44 L765.38,498.55 L765.80,498.66 L766.22,498.77 L766.64,498.88 L767.06,498.98 L767.48,499.09 L767.90,499.20 L768.32,499.31 L768.74,499.42 L769.16,499.52 L769.58,499.63 L770.00,499.74 L770.42,499.84 L770.84,499.95 L771.26,500.05 L771.68,500.16 L772.10,500.26 L772.52,500.37 L772.94,500.47 L773.36,500.57 L773.78,500.68 L774.20,500.78 L774.62,500.88 L775.04,500.99 L775.46,501.09 L775.88,501.19 L776.30,501.29 L776.72,501.39 L777.14,501.49 L777.56,501.59 L777.98,501.69 L778.40,501.79 L778.82,501.89 L779.24,501.99 L779.66,502.09 L780.08,502.19 L780.50,502.29 L780.92,502.39 L781.34,502.48 L781.76,502.58 L782.18,502.68 L782.60,502.77 L783.02,502.87 L783.44,502.97 L783.86,503.06 L784.28,503.16 L784.70,503.25 L785.12,503.35 L785.54,503.44 L785.96,503.54 L786.38,503.63 L786.80,503.72 L787.22,503.82 L787.64,503.91 L788.06,504.00 L788.48,504.10 L788.90,504.19 L789.32,504.28 L789.74,504.37 L790.16,504.46 L790.58,504.55 L791.00,504.65 L791.42,504.74 L791.84,504.83 L792.26,504.92 L792.68,505.01 L793.10,505.10 L793.52,505.18 L793.94,506.29 L794.36,506.21 L794.78,506.05 L795.20,505.07 L795.62,503.58 L796.04,504.13 L796.46,505.67 L796.88,502.95 L797.30,505.33 L797.72,505.52 L798.14,506.89 L798.56,507.82 L798.98,507.55 L799.40,508.14 L799.82,505.54 L800.24,507.80 L800.66,506.07 L801.08,506.75 L801.50,506.30 L801.92,504.16 L802.34,506.02 L802.76,507.08 L803.18,508.45 L803.60,507.58 L804.02,507.26 L804.44,505.06 L804.86,508.22 L805.28,509.26 L805.70,508.24 L806.12,508.24 L806.54,507.72 L806.96,509.39 L807.38,510.55 L807.80,508.88 L808.22,509.72 L808.64,509.16 L809.06,507.87 L809.48,509.56 L809.90,506.85 L810.32,507.58 L810.74,507.46 L811.16,508.19 L811.58,507.70 L812.00,508.30 L812.42,507.67 L812.84,507.30 L813.26,508.32 L813.68,507.75 L814.10,507.51 L814.52,508.00 L814.94,509.41 L815.36,508.47 L815.78,509.69 L816.20,508.85 L816.62,510.40 L817.04,510.22 L817.46,510.92 L817.88,508.37 L818.30,510.07 L818.72,510.74 L819.14,510.10 L819.56,510.84 L819.98,511.88 L820.40,509.30 L820.82,508.78 L821.24,508.80 L821.66,510.41 L822.08,510.79 L822.50,509.90 L822.92,511.21 L823.34,512.22 L823.76,512.33 L824.18,510.43 L824.60,511.18 L825.02,510.90 L825.44,508.90 L825.86,510.30 L826.28,511.54 L826.70,510.83 L827.12,509.07 L827.54,510.84 L827.96,511.48 L828.38,512.50 L828.80,509.87 L829.22,513.95 L829.64,510.72 L830.06,512.79 L830.48,512.84 L830.90,512.80 L831.32,513.13 L831.74,512.61 L832.16,514.10 L832.58,513.00 L833.00,510.96 L833.42,514.51 L833.84,512.51 L834.26,512.57 L834.68,512.64 L835.10,512.70 L835.52,512.76 L835.94,512.83 L836.36,512.89 L836.78,512.95 L837.20,513.02 L837.62,513.08 L838.04,513.14 L838.46,513.20 L838.88,513.27 L839.30,513.33 L839.72,513.39 L840.14,513.45 L840.56,513.51 L840.98,513.57 L841.40,513.63 L841.82,513.69 L842.24,513.75 L842.66,513.81 L843.08,513.87 L843.50,513.93 L843.92,513.99 L844.34,514.05 L844.76,514.11 L845.18,514.17 L845.60,514.23 L846.02,514.29 L846.44,514.34 L846.86,514.40 L847.28,514.46 L847.70,514.52 L848.12,514.57 L848.54,514.63 L848.96,514.69 L849.38,514.74 L849.80,514.80 L850.22,514.86 L850.64,514.91 L851.06,514.97 L851.48,515.02 L851.90,515.08 L852.32,515.13 L852.74,515.19 L853.16,515.24 L853.58,515.30 L854.00,515.35 L854.42,515.41 L854.84,515.46 L855.26,515.51 L855.68,515.57 L856.10,515.62 L856.52,515.67 L856.94,515.73 L857.36,515.78 L857.78,515.83 L858.20,515.88 L858.62,515.94 L859.04,515.99 L859.46,516.04 L859.88,516.09 L860.30,516.14 L860.72,516.19 L861.14,516.24 L861.56,516.29 L861.98,516.34 L862.40,516.39 L862.82,516.44 L863.24,516.49 L863.66,516.54 L864.08,516.59 L864.50,516.64 L864.92,516.69 L865.34,516.74 L865.76,516.79 L866.18,516.84 L866.60,516.88 L867.02,516.93 L867.44,516.98 L867.86,517.03 L868.28,517.07 L868.70,517.12 L869.12,517.17 L869.54,517.22 L869.96,517.26 L870.38,517.31 L870.80,517.35 L871.22,517.40 L871.64,517.45 L872.06,517.49 L872.48,517.54 L872.90,517.58 L873.32,517.63 L873.74,517.67 L874.16,517.72 L874.58,517.76 L875.00,517.81 L875.42,517.85 L875.84,517.89 L876.26,517.94 L876.68,517.98 L877.10,518.02 L877.52,518.07 L877.94,518.11 L878.36,518.08 L878.78,518.60 L879.20,517.16 L879.62,517.10 L880.04,516.33 L880.46,518.46 L880.88,518.04 L881.30,519.63 L881.72,518.50 L882.14,519.90 L882.56,518.64 L882.98,519.50 L883.40,521.68 L883.82,518.43 L884.24,520.05 L884.66,520.87 L885.08,519.64 L885.50,519.88 L885.92,520.64 L886.34,519.01 L886.76,519.41 L887.18,518.65 L887.60,518.85 L888.02,518.58 L888.44,518.92 L888.86,519.61 L889.28,519.52 L889.70,517.88 L890.12,521.02 L890.54,520.49 L890.96,519.42 L891.38,517.91 L891.80,518.47 L892.22,519.12 L892.64,519.14 L893.06,518.25 L893.48,521.00 L893.90,522.69 L894.32,519.38 L894.74,521.98 L895.16,520.99 L895.58,520.63 L896.00,522.07 L896.42,518.96 L896.84,519.99 L897.26,521.21 L897.68,518.97 L898.00,518.62" fill="none" stroke="#e2e210" stroke-width="0.68" stroke-linejoin="round" clip-path="url(#cp)"/>
<path d="M433.84,470.06 L434.26,469.85 L434.30,469.83 L434.72,422.60 L435.14,432.53 L435.56,434.88 L435.98,436.07 L436.40,425.81 L436.82,441.11 L437.24,424.78 L437.66,432.75 L438.08,447.72 L438.50,428.57 L438.92,429.93 L439.34,445.25 L439.76,430.71 L440.18,431.32 L440.60,436.10 L441.02,444.84 L441.44,414.13 L441.86,426.06 L442.28,424.29 L442.70,423.42 L443.12,425.31 L443.54,425.28 L443.96,436.17 L444.38,424.48 L444.80,433.95 L445.22,437.01 L445.64,425.46 L446.06,433.71 L446.48,451.11 L446.90,435.73 L447.32,425.70 L447.74,431.09 L448.16,422.66 L448.58,434.72 L449.00,441.76 L449.42,423.10 L449.84,429.03 L450.26,444.66 L450.68,425.85 L451.10,433.09 L451.52,420.16 L451.94,422.09 L452.36,425.00 L452.78,455.02 L453.20,425.64 L453.62,424.16 L454.04,423.57 L454.46,427.32 L454.88,436.81 L455.30,430.80 L455.72,453.21 L456.14,430.59 L456.56,445.53 L456.98,430.84 L457.40,434.64 L457.82,412.37 L458.24,425.38 L458.66,425.71 L459.08,423.69 L459.50,404.18 L459.92,436.48 L460.34,421.47 L460.76,420.69 L461.18,422.28 L461.60,422.29 L462.02,429.35 L462.44,411.26 L462.86,414.43 L463.28,427.14 L463.70,425.09 L464.12,419.24 L464.54,417.00 L464.96,414.11 L465.38,421.87 L465.80,437.09 L466.22,411.56 L466.64,441.42 L467.06,432.91 L467.48,417.55 L467.90,432.14 L468.32,406.84 L468.74,403.95 L469.16,408.47 L469.58,417.68 L470.00,418.51 L470.42,416.43 L470.84,423.18 L471.26,398.86 L471.68,428.32 L472.10,406.34 L472.52,414.50 L472.94,417.13 L473.36,408.91 L473.78,406.44 L474.20,410.37 L474.62,421.34 L475.04,429.47 L475.46,429.11 L475.88,410.14 L476.30,412.34 L476.72,410.80 L477.14,427.46 L477.56,397.85 L477.98,438.49 L478.40,415.48 L478.82,411.95 L479.24,425.54 L479.66,434.74 L480.08,424.65 L480.50,433.89 L480.92,420.90 L481.34,435.13 L481.76,434.74 L482.18,416.75 L482.60,436.07 L483.02,419.09 L483.44,417.66 L483.86,406.67 L484.28,412.79 L484.70,424.85 L485.12,401.84 L485.54,422.25 L485.96,418.17 L486.38,416.87 L486.80,392.29 L487.22,411.81 L487.64,419.69 L488.06,404.97 L488.48,412.52 L488.90,389.92 L489.32,417.89 L489.74,404.51 L490.16,418.96 L490.58,393.85 L491.00,416.05 L491.42,406.63 L491.84,416.16 L492.26,400.41 L492.68,402.67 L493.10,427.08 L493.52,400.57 L493.94,401.35 L494.36,404.49 L494.78,398.47 L495.20,417.40 L495.62,422.11 L496.04,400.32 L496.46,392.36 L496.88,416.01 L497.30,415.12 L497.72,412.21 L498.14,414.95 L498.56,397.87 L498.98,402.78 L499.40,393.72 L499.82,393.29 L500.24,411.89 L500.66,398.26 L501.08,420.38 L501.50,403.21 L501.92,397.85 L502.34,408.87 L502.76,417.05 L503.18,405.69 L503.60,393.08 L504.02,404.20 L504.44,412.19 L504.86,397.36 L505.28,395.28 L505.70,408.35 L506.12,401.07 L506.54,392.68 L506.96,397.21 L507.38,394.72 L507.80,401.55 L508.22,399.97 L508.64,407.48 L509.06,403.99 L509.48,389.47 L509.90,401.38 L510.32,404.60 L510.74,401.32 L511.16,405.00 L511.58,394.85 L512.00,392.57 L512.42,403.56 L512.84,391.80 L513.26,386.10 L513.68,403.39 L514.10,393.28 L514.52,395.22 L514.94,389.82 L515.36,390.12 L515.78,390.85 L516.20,394.43 L516.62,397.95 L517.04,385.62 L517.46,399.57 L517.88,390.41 L518.30,390.83 L518.72,392.03 L519.14,388.93 L519.56,382.06" fill="none" stroke="#f0f014" stroke-width="0.25" stroke-linejoin="round" clip-path="url(#cb)"/>
<path d="M436.3,45.3V580 M518.8,45.3V580" fill="none" stroke="#f4f410" stroke-width="1.8" stroke-dasharray="9.5 5.5"/>
<path d="M139.5,39V76 M139.5,77V114 M139.5,115V152 M139.5,153V191 M139.5,192V229 M139.5,230V267 M139.5,268V306 M139.5,307V344 M139.5,345V382 M139.5,383V421 M139.5,422V459 M139.5,460V497 M139.5,498V536 M139.5,537V574 M139.5,575V580 M224.5,39V76 M224.5,77V114 M224.5,115V152 M224.5,153V191 M224.5,192V229 M224.5,230V267 M224.5,268V306 M224.5,307V344 M224.5,345V382 M224.5,383V421 M224.5,422V459 M224.5,460V497 M224.5,498V536 M224.5,537V574 M224.5,575V580 M308.5,39V76 M308.5,77V114 M308.5,115V152 M308.5,153V191 M308.5,192V229 M308.5,230V267 M308.5,268V306 M308.5,307V344 M308.5,345V382 M308.5,383V421 M308.5,422V459 M308.5,460V497 M308.5,498V536 M308.5,537V574 M308.5,575V580 M392.5,39V76 M392.5,77V114 M392.5,115V152 M392.5,153V191 M392.5,192V229 M392.5,230V267 M392.5,268V306 M392.5,307V344 M392.5,345V382 M392.5,383V421 M392.5,422V459 M392.5,460V497 M392.5,498V536 M392.5,537V574 M392.5,575V580 M477.5,39V76 M477.5,77V114 M477.5,115V152 M477.5,153V191 M477.5,192V229 M477.5,230V267 M477.5,268V306 M477.5,307V344 M477.5,345V382 M477.5,383V421 M477.5,422V459 M477.5,460V497 M477.5,498V536 M477.5,537V574 M477.5,575V580 M561.5,39V76 M561.5,77V114 M561.5,115V152 M561.5,153V191 M561.5,192V229 M561.5,230V267 M561.5,268V306 M561.5,307V344 M561.5,345V382 M561.5,383V421 M561.5,422V459 M561.5,460V497 M561.5,498V536 M561.5,537V574 M561.5,575V580 M645.5,39V76 M645.5,77V114 M645.5,115V152 M645.5,153V191 M645.5,192V229 M645.5,230V267 M645.5,268V306 M645.5,307V344 M645.5,345V382 M645.5,383V421 M645.5,422V459 M645.5,460V497 M645.5,498V536 M645.5,537V574 M645.5,575V580 M729.5,39V76 M729.5,77V114 M729.5,115V152 M729.5,153V191 M729.5,192V229 M729.5,230V267 M729.5,268V306 M729.5,307V344 M729.5,345V382 M729.5,383V421 M729.5,422V459 M729.5,460V497 M729.5,498V536 M729.5,537V574 M729.5,575V580 M814.5,39V76 M814.5,77V114 M814.5,115V152 M814.5,153V191 M814.5,192V229 M814.5,230V267 M814.5,268V306 M814.5,307V344 M814.5,345V382 M814.5,383V421 M814.5,422V459 M814.5,460V497 M814.5,498V536 M814.5,537V574 M814.5,575V580 M56,76.5H898 M56,114.5H898 M56,152.5H898 M56,191.5H898 M56,229.5H898 M56,267.5H898 M56,306.5H898 M56,344.5H898 M56,382.5H898 M56,421.5H898 M56,459.5H898 M56,497.5H898 M56,536.5H898 M56,574.5H898" stroke="#fff" stroke-opacity="0.165" stroke-width="1" fill="none"/>
<path d="M97.5,580v-3 M97.5,39v3 M139.5,580v-5.5 M139.5,39v5.5 M181.5,580v-3 M181.5,39v3 M224.5,580v-5.5 M224.5,39v5.5 M266.5,580v-3 M266.5,39v3 M308.5,580v-5.5 M308.5,39v5.5 M350.5,580v-3 M350.5,39v3 M392.5,580v-5.5 M392.5,39v5.5 M561.5,580v-5.5 M561.5,39v5.5 M603.5,580v-3 M603.5,39v3 M645.5,580v-5.5 M645.5,39v5.5 M687.5,580v-3 M687.5,39v3 M729.5,580v-5.5 M729.5,39v5.5 M772.5,580v-3 M772.5,39v3 M814.5,580v-5.5 M814.5,39v5.5 M856.5,580v-3 M856.5,39v3 M56,574.5h6 M898,574.5h-6 M56,555.5h3 M898,555.5h-3 M56,536.5h6 M898,536.5h-6 M56,516.5h3 M898,516.5h-3 M56,497.5h6 M898,497.5h-6 M56,478.5h3 M898,478.5h-3 M56,459.5h6 M898,459.5h-6 M56,440.5h3 M898,440.5h-3 M56,421.5h6 M898,421.5h-6 M56,401.5h3 M898,401.5h-3 M56,382.5h6 M898,382.5h-6 M56,363.5h3 M898,363.5h-3 M56,344.5h6 M898,344.5h-6 M56,325.5h3 M898,325.5h-3 M56,306.5h6 M898,306.5h-6 M56,287.5h3 M898,287.5h-3 M56,267.5h6 M898,267.5h-6 M56,248.5h3 M898,248.5h-3 M56,229.5h6 M898,229.5h-6 M56,210.5h3 M898,210.5h-3 M56,191.5h6 M898,191.5h-6 M56,172.5h3 M898,172.5h-3 M56,152.5h6 M898,152.5h-6 M56,133.5h3 M898,133.5h-3 M56,114.5h6 M898,114.5h-6 M56,95.5h3 M898,95.5h-3 M56,76.5h6 M898,76.5h-6 M56,57.5h3 M898,57.5h-3" stroke="#afafaf" stroke-width="1" fill="none"/>
<path d="M477.5,580v-5.5 M477.5,39v5.5" stroke="#d2d26e" stroke-width="1" fill="none"/>
<rect x="55.5" y="38.5" width="843" height="542" fill="none" stroke="#afafaf"/>
<path d="M434.5,38.5H519.5 M434.5,580.5H519.5" stroke="#e0e00a" fill="none"/>
<g font-family="'Liberation Sans',Arial,sans-serif" font-size="10.67" fill="#b2b2b2" stroke="#b2b2b2" stroke-width="0.15">
<text x="55.5" y="594" text-anchor="middle">-100</text>
<text x="139.5" y="594" text-anchor="middle">-80</text>
<text x="224.5" y="594" text-anchor="middle">-60</text>
<text x="308.5" y="594" text-anchor="middle">-40</text>
<text x="392.5" y="594" text-anchor="middle">-20</text>
<text x="477.5" y="594" text-anchor="middle">0</text>
<text x="561.5" y="594" text-anchor="middle">20</text>
<text x="645.5" y="594" text-anchor="middle">40</text>
<text x="729.5" y="594" text-anchor="middle">60</text>
<text x="814.5" y="594" text-anchor="middle">80</text>
<text x="898.5" y="594" text-anchor="middle">100</text>
<text x="50.5" y="578.3" text-anchor="end">-110</text>
<text x="50.5" y="540.3" text-anchor="end">-105</text>
<text x="50.5" y="501.3" text-anchor="end">-100</text>
<text x="50.5" y="463.3" text-anchor="end">-95</text>
<text x="50.5" y="425.3" text-anchor="end">-90</text>
<text x="50.5" y="386.3" text-anchor="end">-85</text>
<text x="50.5" y="348.3" text-anchor="end">-80</text>
<text x="50.5" y="310.3" text-anchor="end">-75</text>
<text x="50.5" y="271.3" text-anchor="end">-70</text>
<text x="50.5" y="233.3" text-anchor="end">-65</text>
<text x="50.5" y="195.3" text-anchor="end">-60</text>
<text x="50.5" y="156.3" text-anchor="end">-55</text>
<text x="50.5" y="118.3" text-anchor="end">-50</text>
<text x="50.5" y="80.3" text-anchor="end">-45</text>
</g>
<g font-family="'Liberation Sans',Arial,sans-serif" font-size="13" fill="#afafaf">
<text x="476.5" y="611.7" text-anchor="middle">Frequency (MHz)</text>
<text transform="translate(18.5,309) rotate(-90)" text-anchor="middle">dBm</text>
</g>
</svg>
<div class="hdr"><span>Occupied Bandwidth</span></div>
<div class="tbl">
 <div class="row r1">
  <div class="cell" style="left:0;width:228px;border-left:none;padding-left:3px">Input Buffer</div>
  <div class="cell" style="left:228px;width:230px;letter-spacing:-0.17px">Channel Power (dBm)</div>
  <div class="cell" style="left:458px;width:229px;padding-left:3.5px;letter-spacing:-0.03px">Occupied Bandwidth (MHz)</div>
  <div class="cell" style="left:687px;width:229px;padding-left:3.2px;letter-spacing:-0.15px">Frequency Error (kHz)</div>
 </div>
 <div class="row r2">
  <div class="cell" style="left:0;width:228px;border-left:none"></div>
  <div class="cell" style="left:228px;width:230px">-66.4346</div>
  <div class="cell" style="left:458px;width:229px;padding-left:3.3px">19.4865</div>
  <div class="cell" style="left:687px;width:229px;padding-left:3.3px">212.9351</div>
 </div>
</div>
<div class="sb"><span class="l">Stopped</span><span class="r">ΔT=10.0000 us&nbsp; Samples/Update=2000&nbsp; VBW=7.5000 kHz&nbsp; RBW=100.0000 kHz&nbsp; Sample Rate=200.0000 MHz&nbsp; Updates=8&nbsp; T=0.0001</span>
<svg style="position:absolute;left:870px;top:0" width="48" height="22" viewBox="870 722 48 22">
<circle cx="881.5" cy="727.4" r="1.4" fill="#555"/><circle cx="881.5" cy="733.4" r="1.4" fill="#555"/><circle cx="881.5" cy="739.4" r="1.4" fill="#555"/>
<path d="M902,729.3 H913.6 L907.8,735.8 Z" fill="#999"/><path d="M902,737.5H913.6" stroke="#999" stroke-width="1.6"/>
</svg>
</div>
</body></html>
